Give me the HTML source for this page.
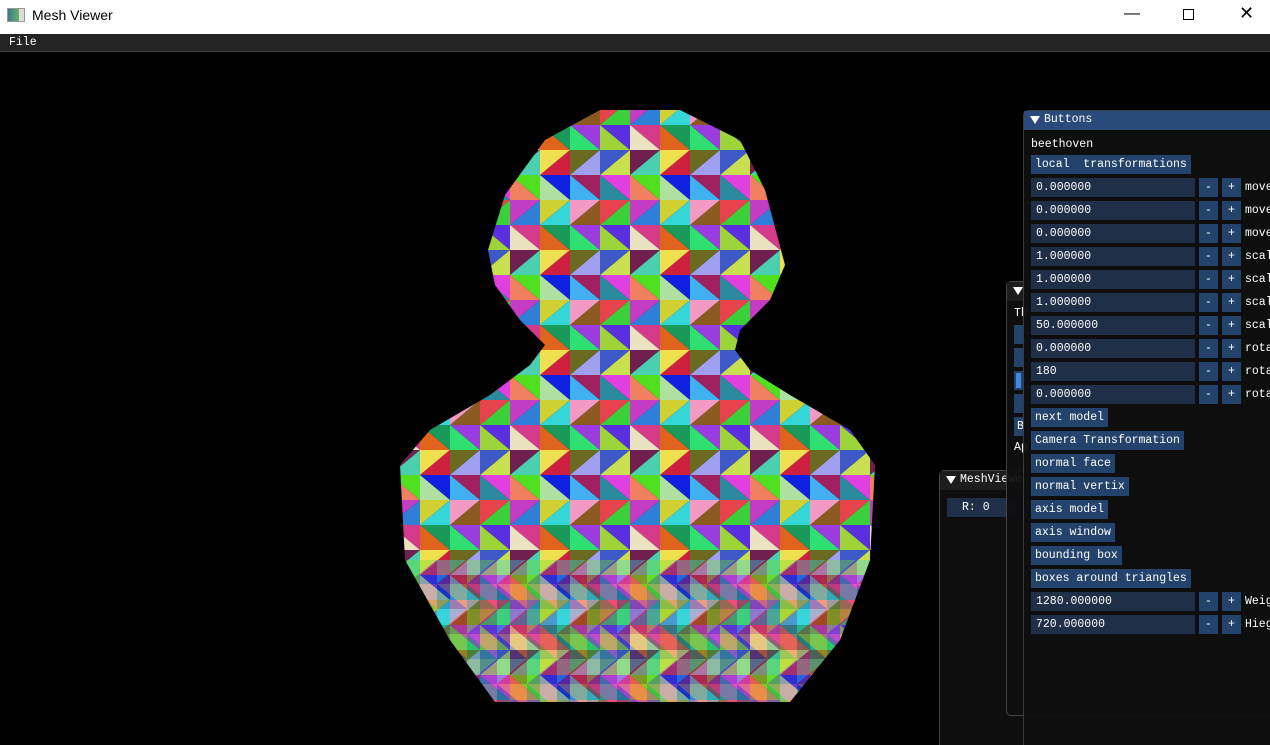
<!DOCTYPE html>
<html><head><meta charset="utf-8"><style>
*{margin:0;padding:0;box-sizing:border-box}
html,body{width:1270px;height:745px;overflow:hidden}
body{background:#000;position:relative;font-family:"Liberation Mono",monospace;font-size:11.5px;color:#fff}
.title{position:absolute;left:0;top:0;width:1270px;height:34px;background:#fff;color:#000;font-family:"Liberation Sans",sans-serif;font-size:14px}
.menu{position:absolute;left:0;top:34px;width:1270px;height:18px;background:#242424;border-bottom:1px solid #444}
.win{position:absolute;background:rgba(15,15,15,.94);border:1px solid #444;border-radius:5px 0 0 0}
.hdr{height:19px;line-height:18px;padding-left:20px;position:relative}
.hdr:before{content:"";position:absolute;left:6px;top:5px;border-left:5px solid transparent;border-right:5px solid transparent;border-top:8px solid #fff}
.a{position:absolute;white-space:pre;line-height:19px}
.in{position:absolute;left:7px;width:164px;height:19px;background:#1f2f48;padding-left:5px;line-height:19px}
.b{position:absolute;height:19px;width:19px;background:#23436c;text-align:center;line-height:19px}
.btn{position:absolute;left:7px;height:19px;background:#23436c;padding:0 4px;line-height:19px;white-space:pre}
</style></head><body>
<div class="title"><div style="position:absolute;left:7px;top:8px;width:18px;height:14px;border:1px solid #999;background:linear-gradient(90deg,#3b7a8a,#6bb06b 70%,#ddd 70%)"></div><span style="position:absolute;left:32px;top:7px">Mesh Viewer</span>
<span style="position:absolute;left:1124px;top:5px;font-size:16px">&#8212;</span>
<div style="position:absolute;left:1183px;top:9px;width:11px;height:11px;border:1px solid #000"></div>
<span style="position:absolute;left:1239px;top:3px;font-size:18px">&#x2715;</span></div>
<div class="menu"><span style="position:absolute;left:9px;top:2px">File</span></div>

<svg style="position:absolute;left:0;top:0" width="1270" height="745">
<defs>
<pattern id="p" width="120" height="100" patternUnits="userSpaceOnUse">
<polygon points="0,0 30,0 0,25" fill="#e8434d"/><polygon points="30,0 30,25 0,25" fill="#3ccf3c"/>
<polygon points="30,0 60,0 30,25" fill="#c43cc4"/><polygon points="60,0 60,25 30,25" fill="#2f7ed8"/>
<polygon points="60,0 90,0 60,25" fill="#d0d033"/><polygon points="90,0 90,25 60,25" fill="#34d6d6"/>
<polygon points="90,0 120,0 90,25" fill="#f39ac4"/><polygon points="120,0 120,25 90,25" fill="#8a5a20"/>
<polygon points="0,25 30,25 30,50" fill="#5a2fe0"/><polygon points="0,25 0,50 30,50" fill="#9cd43a"/>
<polygon points="30,25 60,25 60,50" fill="#d63a8a"/><polygon points="30,25 30,50 60,50" fill="#eae2c0"/>
<polygon points="60,25 90,25 90,50" fill="#1a9a5a"/><polygon points="60,25 60,50 90,50" fill="#e0641c"/>
<polygon points="90,25 120,25 120,50" fill="#9a3ce0"/><polygon points="90,25 90,50 120,50" fill="#2fe070"/>
<polygon points="0,50 30,50 0,75" fill="#3f58c8"/><polygon points="30,50 30,75 0,75" fill="#c8e050"/>
<polygon points="30,50 60,50 30,75" fill="#702050"/><polygon points="60,50 60,75 30,75" fill="#4ad0b0"/>
<polygon points="60,50 90,50 60,75" fill="#f0e050"/><polygon points="90,50 90,75 60,75" fill="#d02040"/>
<polygon points="90,50 120,50 90,75" fill="#6a6a20"/><polygon points="120,50 120,75 90,75" fill="#a0a0f0"/>
<polygon points="0,75 30,75 30,100" fill="#e040e0"/><polygon points="0,75 0,100 30,100" fill="#2a8aa0"/>
<polygon points="30,75 60,75 60,100" fill="#50e020"/><polygon points="30,75 30,100 60,100" fill="#f08060"/>
<polygon points="60,75 90,75 90,100" fill="#1020e0"/><polygon points="60,75 60,100 90,100" fill="#b0e0a0"/>
<polygon points="90,75 120,75 120,100" fill="#a02060"/><polygon points="90,75 90,100 120,100" fill="#40b0f0"/>
</pattern>
<pattern id="q" width="60" height="50" patternUnits="userSpaceOnUse" patternTransform="translate(17,9)">
<polygon points="0,0 30,0 0,25" fill="#3cd0e0"/><polygon points="30,0 30,25 0,25" fill="#c03030"/>
<polygon points="30,0 60,0 30,25" fill="#70e030"/><polygon points="60,0 60,25 30,25" fill="#6040c0"/>
<polygon points="0,25 30,25 30,50" fill="#e0a020"/><polygon points="0,25 0,50 30,50" fill="#2050a0"/>
<polygon points="30,25 60,25 60,50" fill="#f060b0"/><polygon points="30,25 30,50 60,50" fill="#20a060"/>
</pattern>
</defs>
<path d="M600,110 L680,110 L740,140 L765,190 L785,265 L770,300 L740,330 L735,350 L750,370 L790,395 L850,430 L875,465 L870,560 L840,640 L790,702 L495,702 L450,640 L405,560 L400,465 L430,430 L490,395 L530,365 L545,345 L520,320 L495,285 L488,250 L505,195 L545,140 Z" fill="url(#p)"/>
<path d="M405,560 L450,640 L495,702 L790,702 L840,640 L870,560 Z" fill="url(#q)" opacity=".4"/>
</svg>

<div class="win" style="left:939px;top:470px;width:400px;height:280px"><div class="hdr" style="background:#1d1d1d">MeshViewer</div>
<div style="position:absolute;left:7px;top:27px;width:70px;height:19px;background:#1f2f48;line-height:19px;padding-left:15px">R:  0</div></div>
<div class="win" style="left:1006px;top:281px;width:300px;height:435px;border-radius:5px 0 0 5px"><div class="hdr" style="background:#1d1d1d"></div>
<div class="a" style="left:7px;top:22px">Th</div>
<div style="position:absolute;left:7px;top:43px;width:10px;height:19px;background:#23436c"></div>
<div style="position:absolute;left:7px;top:66px;width:10px;height:19px;background:#23436c"></div>
<div style="position:absolute;left:7px;top:89px;width:10px;height:19px;background:#23436c"><div style="margin:2px;width:5px;height:15px;background:#4287e0"></div></div>
<div style="position:absolute;left:7px;top:112px;width:10px;height:19px;background:#23436c"></div>
<div style="position:absolute;left:7px;top:135px;width:10px;height:19px;background:#23436c;line-height:19px;padding-left:3px">B</div>
<div class="a" style="left:7px;top:156px">Ap</div></div>

<div class="win" style="left:1023px;top:110px;width:260px;height:640px;border-color:#3a3a45">
<div class="hdr" style="background:#294a7a">Buttons</div>
<div class="a" style="left:7px;top:24px">beethoven</div>
<div class="btn" style="top:44px">local  transformations</div>
<div class="in" style="top:67px">0.000000</div><div class="b" style="left:175px;top:67px">-</div><div class="b" style="left:198px;top:67px">+</div><div class="a" style="left:221px;top:67px">move</div>
<div class="in" style="top:90px">0.000000</div><div class="b" style="left:175px;top:90px">-</div><div class="b" style="left:198px;top:90px">+</div><div class="a" style="left:221px;top:90px">move</div>
<div class="in" style="top:113px">0.000000</div><div class="b" style="left:175px;top:113px">-</div><div class="b" style="left:198px;top:113px">+</div><div class="a" style="left:221px;top:113px">move</div>
<div class="in" style="top:136px">1.000000</div><div class="b" style="left:175px;top:136px">-</div><div class="b" style="left:198px;top:136px">+</div><div class="a" style="left:221px;top:136px">scal</div>
<div class="in" style="top:159px">1.000000</div><div class="b" style="left:175px;top:159px">-</div><div class="b" style="left:198px;top:159px">+</div><div class="a" style="left:221px;top:159px">scal</div>
<div class="in" style="top:182px">1.000000</div><div class="b" style="left:175px;top:182px">-</div><div class="b" style="left:198px;top:182px">+</div><div class="a" style="left:221px;top:182px">scal</div>
<div class="in" style="top:205px">50.000000</div><div class="b" style="left:175px;top:205px">-</div><div class="b" style="left:198px;top:205px">+</div><div class="a" style="left:221px;top:205px">scal</div>
<div class="in" style="top:228px">0.000000</div><div class="b" style="left:175px;top:228px">-</div><div class="b" style="left:198px;top:228px">+</div><div class="a" style="left:221px;top:228px">rota</div>
<div class="in" style="top:251px">180</div><div class="b" style="left:175px;top:251px">-</div><div class="b" style="left:198px;top:251px">+</div><div class="a" style="left:221px;top:251px">rota</div>
<div class="in" style="top:274px">0.000000</div><div class="b" style="left:175px;top:274px">-</div><div class="b" style="left:198px;top:274px">+</div><div class="a" style="left:221px;top:274px">rota</div>
<div class="btn" style="top:297px">next model</div>
<div class="btn" style="top:320px">Camera Transformation</div>
<div class="btn" style="top:343px">normal face</div>
<div class="btn" style="top:366px">normal vertix</div>
<div class="btn" style="top:389px">axis model</div>
<div class="btn" style="top:412px">axis window</div>
<div class="btn" style="top:435px">bounding box</div>
<div class="btn" style="top:458px">boxes around triangles</div>
<div class="in" style="top:481px">1280.000000</div><div class="b" style="left:175px;top:481px">-</div><div class="b" style="left:198px;top:481px">+</div><div class="a" style="left:221px;top:481px">Weig</div>
<div class="in" style="top:504px">720.000000</div><div class="b" style="left:175px;top:504px">-</div><div class="b" style="left:198px;top:504px">+</div><div class="a" style="left:221px;top:504px">Hieg</div>
</div>
</body></html>
